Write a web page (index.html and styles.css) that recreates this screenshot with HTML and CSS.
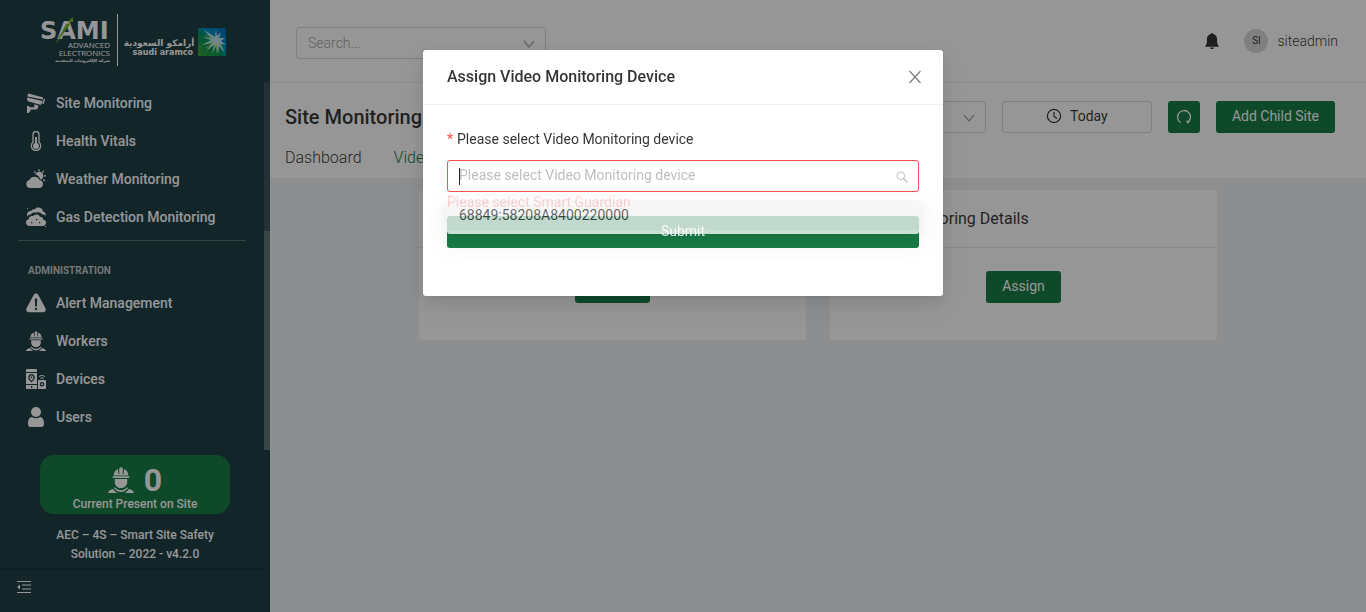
FILE: index.html
```html
<!DOCTYPE html>
<html lang="en">
<head>
<meta charset="utf-8">
<meta name="viewport" content="width=device-width, initial-scale=1">
<title>Site Monitoring</title>
<link rel="stylesheet" href="styles.css">
</head>
<body>
<svg class="sprite" aria-hidden="true">
  <symbol id="worker" viewBox="0 0 20 20">
    <path d="M3.6 7.2h12.8v1.2H3.6zM4.3 6.6C4.4 4.200 5.700 2.300 7.500 1.500l.7 4h.6L8.500.900h3l-.3 4.600h.6l.7-4c1.800.8 3.100 2.700 3.200 5.100zM9.500 0h1v5.500h-1zM5.200 9.200h9.600v2.300c0 2.600-2.100 4.700-4.800 4.700s-4.800-2.100-4.800-4.700zM5.300 15.500c1.200 1.500 2.900 2.300 4.700 2.300s3.500-.8 4.700-2.300l.7.900c-1.400 1.900-3.300 2.800-5.400 2.800s-4-.9-5.400-2.800zM0 20c.3-1.600 2-2.600 4-3 .9 1.500 1.900 2.400 3.200 3zM20 20c-.3-1.600-2-2.600-4-3-.9 1.500-1.900 2.400-3.200 3z"/>
  </symbol>
  <symbol id="chevron" viewBox="0 0 12 12">
    <path d="M1 3l5 6 5-6" fill="none" stroke="currentColor" stroke-width="1.200"/>
  </symbol>
</svg>

<div class="app">
  <aside class="sidebar">
    <div class="brand">
      <svg class="brand-logo" viewBox="0 0 190 56" role="img" aria-label="SAMI Advanced Electronics, Saudi Aramco">
        <defs>
          <linearGradient id="sky" x1="0" y1="1" x2="1" y2="0">
            <stop offset="0" stop-color="#3fa535"/><stop offset=".45" stop-color="#00945e"/><stop offset=".6" stop-color="#0093c8"/><stop offset="1" stop-color="#0068b4"/>
          </linearGradient>
        </defs>
        <text class="logo-sami" x="0" y="29">SAMI</text>
        <path d="M27 12l6-5v5zM26 14l5-1-16 22z" fill="#7ab32c"/>
        <text class="logo-sub" x="70" y="38" text-anchor="end">ADVANCED</text>
        <text class="logo-sub" x="70" y="46" text-anchor="end">ELECTRONICS</text>
        <text class="logo-tiny" x="70" y="52" text-anchor="end">شركة الإلكترونيات المتقدمة</text>
        <path d="M77.500 4v52" stroke="#fff" stroke-width="1"/>
        <text class="logo-ar" x="119" y="36" text-anchor="middle">أرامكو السعودية</text>
        <text class="logo-en" x="153" y="45" text-anchor="end">saudi aramco</text>
        <rect x="158" y="18" width="28" height="28" fill="url(#sky)"/>
        <path d="M175 27l-11-7 7 8-9-1 9 3-9 5 10-2-6 8 8-6-2 9 4-8 2 8 1-8 5 6-3-8 5 1-5-4 4-3-6 0 2-6-4 4-1-7z" fill="#fff" fill-opacity=".75"/>
        <path d="M174 29l-9-4M173 32l-7 6M176 34l1 9M179 33l5 7" stroke="#9fd04a" stroke-width=".8"/>
      </svg>
    </div>
    <nav class="menu">
      <div class="menu-list">
        <a class="menu-item" href="#"><svg class="menu-icon" viewBox="0 0 20 20"><path d="M2.500.500l14 3.800c.6.200.8.600.7 1.100l-.3 1.200L1.500 3.400 1.800 1c.1-.4.300-.6.700-.500zM1.200 4.400L16.500 8l-1.200 3.300c-.2.400-.6.600-1 .500L2.700 8.500C1.300 8 .8 6.700 1.200 4.400zM18 5.500l1 .4-1.200 5-1.600-.5zM8.500 11.200l4 1.200-.8 2.800c-.2.800-.7 1.200-1.500 1.200H4.500v2h-1.300V20H1v-7h2.200v1.300h5z"/></svg>Site Monitoring</a>
        <a class="menu-item" href="#"><svg class="menu-icon" viewBox="0 0 20 20"><path d="M7 11.200V3.600a3 3 0 016 0v7.600a4.700 4.700 0 11-6 0z" fill="none" stroke="currentColor" stroke-width="1.300"/><circle cx="10" cy="15" r="3"/><path d="M9 6h2v8H9z"/></svg>Health Vitals</a>
        <a class="menu-item" href="#"><svg class="menu-icon" viewBox="0 0 20 20"><path d="M4 19a4 4 0 01-.5-7.900A5.500 5.500 0 0113.500 11c2 .2 3.500 1.900 3.500 4s-1.500 4-3.500 4zM9.200 5.500a4.200 4.200 0 117 4.300l-.8.700c-.6-.4-.9-.5-1.300-.6C13.200 7.500 11.500 6 9.200 5.500zM12 .5l1.300-.3.500 2-1.300.3zM17 1.500l1.200.6-1.200 1.800-1-.7zM18 6.200h2v1.300h-2zM17.500 10l1.800 1.500-.8.900-1.700-1.400zM7.500 3l1-.9 1.500 1.300-.9.900z"/></svg>Weather Monitoring</a>
        <a class="menu-item" href="#"><svg class="menu-icon" viewBox="0 0 20 20"><path d="M1 7.500C1 5 3 4 5 4c1-1.500 2.500-2 3.800-1.500C10 .3 12 .1 14 .8c2 .8 2.800 2 2.800 3.500C19 5 20 6.500 19.500 9c-1-1.200-2-1.600-3.500-1.700-1.500-1.800-4-2.500-6-1.500C7.500 5 5.500 6 5 7.500c-2 0-3 .7-4 2z"/><path fill-rule="evenodd" d="M3.500 19C1.500 19 0 17.500 0 15.500c0-1.800 1-3 2.500-3.300.2-2 2-3.600 4.500-3.200C9 6.800 13 6.800 14 9.800c2 .1 3 1 3.200 2.700 1.800.3 2.800 1.500 2.800 3.200 0 2-1.500 3.300-3.500 3.300zM5 15v1.300h1.300V15zM10 12v1.300h1.300V12zM13 15v1.300h1.300V15z"/><path d="M1.200 1h1v1h-1zM19 19h1v1h-1z"/></svg>Gas Detection Monitoring</a>
      </div>
      <h2 class="menu-heading">ADMINISTRATION</h2>
      <div class="menu-list">
        <a class="menu-item" href="#"><svg class="menu-icon" viewBox="0 0 20 20"><path fill-rule="evenodd" d="M7.800 1.800c1-1.700 3.400-1.700 4.400 0l7.300 13.500c1 1.700-.2 3.900-2.200 3.900H2.700c-2 0-3.200-2.200-2.200-3.900zM8.800 5.500l.3 8h1.800l.3-8zM9 15v2h2v-2z"/></svg>Alert Management</a>
        <a class="menu-item" href="#"><svg class="menu-icon"><use href="#worker"/></svg>Workers</a>
        <a class="menu-item" href="#"><svg class="menu-icon" viewBox="0 0 20 20"><path fill-rule="evenodd" d="M1.300 0h8.400C10.500 0 11 .5 11 1.300V3H0V1.300C0 .5.500 0 1.300 0zM0 4h11v11H0zM5.500 5C3.500 5 2.200 6.500 2.200 8.300c0 2 1.500 3.300 3.300 5.200 1.800-1.900 3.300-3.200 3.300-5.200C8.800 6.500 7.500 5 5.500 5zM0 16h11v2.700c0 .8-.5 1.300-1.300 1.300H1.300C.5 20 0 19.500 0 18.700zM5 17v2h1.300v-2zM13 11h6c.6 0 1 .4 1 1v7c0 .6-.4 1-1 1h-7v-8c0-.6.400-1 1-1zM16 13a2.300 2.300 0 100 4.600 2.300 2.300 0 000-4.600z"/><path fill-rule="evenodd" d="M5.500 6.200a2.200 2.200 0 00-2 2.200c0 1.300.9 2 2 3.300 1.100-1.300 2-2 2-3.300a2.200 2.200 0 00-2-2.200zM4.800 7.500h1.400v1.700H4.800z"/><circle cx="16" cy="15.300" r="1"/><path d="M13 7.500q3-2.500 6 0M14.300 9.500q1.700-1.400 3.400 0" fill="none" stroke="currentColor"/></svg>Devices</a>
        <a class="menu-item" href="#"><svg class="menu-icon" viewBox="0 0 20 20"><circle cx="10" cy="5" r="5"/><path d="M2 16c0-3.600 1.500-5.800 4-6 2.400 1.800 5.600 1.800 8 0 2.500.2 4 2.400 4 6v1.500c0 1.500-1 2.500-2.500 2.500h-11C3 20 2 19 2 17.500z"/></svg>Users</a>
      </div>
    </nav>
    <section class="presence">
      <div class="presence-row"><svg class="presence-icon"><use href="#worker"/></svg><strong class="presence-count">0</strong></div>
      <p class="presence-label">Current Present on Site</p>
    </section>
    <p class="version">AEC – 4S – Smart Site Safety<br>Solution – 2022 - v4.2.0</p>
    <div class="sidebar-foot">
      <button class="fold" type="button" aria-label="Collapse menu"><svg viewBox="0 0 16 16" width="16" height="16"><path d="M1 2h14v1H1zM6 5.500h9v1H6zM6 9.500h9v1H6zM1 13h14v1H1zM4 5.500v5L1 8z"/></svg></button>
    </div>
  </aside>

  <div class="main">
    <header class="topbar">
      <div class="picker search">
        <select aria-label="Search"><option>Search...</option></select>
        <svg class="picker-arrow"><use href="#chevron"/></svg>
      </div>
      <div class="account">
        <button class="bell" type="button" aria-label="Notifications"><svg viewBox="0 0 16 16" width="16" height="16"><path d="M7.200 0h1.600v1.100c2.700.4 4.300 2.400 4.300 5.200v4l1.600 2.700v.8H1.300V13l1.600-2.700v-4c0-2.800 1.600-4.800 4.300-5.200zM6 14.500h4c-.2 1-1 1.500-2 1.500s-1.800-.5-2-1.500z"/></svg></button>
        <span class="avatar">SI</span>
        <span class="account-name">siteadmin</span>
      </div>
    </header>

    <section class="pagehead">
      <div class="pagehead-row">
        <h1 class="page-title">Site Monitoring</h1>
        <div class="tools">
          <div class="picker site">
            <select aria-label="Site"><option></option></select>
            <svg class="picker-arrow"><use href="#chevron"/></svg>
          </div>
          <button class="btn today" type="button"><svg viewBox="0 0 16 16" width="16" height="16"><g fill="none" stroke="currentColor" stroke-width="1.200"><circle cx="8" cy="8" r="6.600"/><path d="M8 4v4.500l3 2"/></g></svg>Today</button>
          <button class="btn btn-primary reload" type="button" aria-label="Reload"><svg viewBox="0 0 16 16" width="16" height="16"><path d="M4.500 13.500a6.500 6.500 0 117.300-.2" fill="none" stroke="currentColor" stroke-width="1.300"/><path d="M10 11.500l4 .5-2.500 3z"/></svg></button>
          <button class="btn btn-primary" type="button">Add Child Site</button>
        </div>
      </div>
      <nav class="tabs">
        <a class="tab" href="#">Dashboard</a>
        <a class="tab tab-active" href="#">Video</a>
      </nav>
    </section>

    <main class="cards">
      <article class="card">
        <h2 class="card-title">Details</h2>
        <div class="card-body"><button class="btn btn-primary" type="button">Assign</button></div>
      </article>
      <article class="card">
        <h2 class="card-title">Video Monitoring Details</h2>
        <div class="card-body"><button class="btn btn-primary" type="button">Assign</button></div>
      </article>
    </main>
  </div>
</div>

<div class="mask">
  <div class="modal" role="dialog" aria-modal="true" aria-labelledby="modal-title">
    <header class="modal-head">
      <h2 class="modal-title" id="modal-title">Assign Video Monitoring Device</h2>
      <button class="close" type="button" aria-label="Close"><svg viewBox="0 0 16 16" width="16" height="16"><path d="M2.500 2l11 12M13.500 2l-11 12" fill="none" stroke="currentColor" stroke-width="1.300"/></svg></button>
    </header>
    <form class="modal-body">
      <label class="label" for="device"><span class="required">*</span>Please select Video Monitoring device</label>
      <div class="field">
        <input class="field-input" id="device" type="text" role="combobox" aria-expanded="true" aria-controls="device-list" placeholder="Please select Video Monitoring device">
        <span class="caret"></span>
        <svg class="field-icon" viewBox="0 0 12 12"><circle cx="4.800" cy="4.800" r="3.800" fill="none" stroke="currentColor"/><path d="M7.500 7.500l4 4" stroke="currentColor" stroke-width="1.200"/></svg>
        <div class="dropdown" id="device-list" role="listbox"><div class="option" role="option" aria-selected="false">68849:58208A8400220000</div></div>
      </div>
      <p class="error">Please select Smart Guardian</p>
      <button class="btn btn-primary submit" type="button">Submit</button>
    </form>
  </div>
</div>
</body>
</html>
```

FILE: styles.css
```css
*, *::before, *::after { box-sizing: border-box; }

body {
  margin: 0;
  font: 300 14px/22px Roboto, "Noto Sans", sans-serif;
  color: rgba(0, 0, 0, .8);
  background: #f0f2f5;
}

h1, h2, p { margin: 0; }
a { color: inherit; text-decoration: none; }
svg { display: block; fill: currentColor; flex: none; }
button, input, select { font: inherit; color: inherit; }
button { cursor: pointer; }
.sprite { display: none; }

.app { display: flex; min-height: 100vh; }

/* Sidebar */
.sidebar {
  display: flex;
  flex-direction: column;
  flex: none;
  width: 270px;
  height: 100vh;
  background: #203f46;
  color: #fff;
}
.brand { flex: none; height: 82px; padding: 10px 40px 0; }
.brand-logo { width: 190px; height: 56px; }
.logo-sami { font: 700 24px "DejaVu Sans", sans-serif; }
.logo-sub { font: 400 8px "Open Sans", sans-serif; }
.logo-tiny { font: 700 4px "DejaVu Sans", sans-serif; }
.logo-ar { font: 700 9px "DejaVu Sans", sans-serif; }
.logo-en { font: 700 8px "DejaVu Sans", sans-serif; }

.menu {
  height: 368px;
  padding: 2px 18px 0;
  background:
    linear-gradient(#5f7679, #5f7679) right 149px / 6px 100% no-repeat,
    linear-gradient(#3a5459, #3a5459) right top / 6px 100% no-repeat;
}
.menu-item {
  display: flex;
  align-items: center;
  gap: 10px;
  height: 38px;
  padding-left: 8px;
  font-weight: 500;
}
.menu-icon { width: 20px; height: 20px; }
.menu-heading {
  margin: 4px 6px 0 0;
  padding: 19px 10px 2px;
  border-top: 1px solid #5f7679;
  font-size: 10px;
  font-weight: 700;
  color: #c3cccd;
}
.presence {
  margin: 5px 40px 0;
  height: 59px;
  padding-top: 10px;
  border-radius: 14px;
  background: #187c46;
  text-align: center;
}
.presence-row { display: flex; justify-content: center; align-items: center; gap: 10px; height: 30px; }
.presence-icon { width: 26px; height: 28px; }
.presence-count { font-size: 32px; line-height: 30px; font-weight: 700; }
.presence-label { font-size: 12px; line-height: 18px; font-weight: 500; }
.version {
  padding: 12px 40px 4px;
  font-size: 12px;
  line-height: 19px;
  font-weight: 500;
  text-align: center;
}
.sidebar-foot { flex: 1; padding: 10px 16px; border-top: 1px solid #1b363c; }
.fold, .bell, .close { padding: 0; border: 0; background: none; }

/* Page */
.main { flex: 1; min-width: 0; }
.topbar {
  display: flex;
  justify-content: space-between;
  align-items: center;
  height: 83px;
  padding: 4px 28px 0 26px;
  border-bottom: 1px solid #f0f0f0;
  background: #fff;
}
.picker { position: relative; height: 32px; }
.picker select {
  width: 100%;
  height: 100%;
  padding: 0 11px;
  border: 1px solid #d9d9d9;
  border-radius: 3px;
  background: #fff;
  color: #a8a8a8;
  appearance: none;
}
.picker-arrow { position: absolute; right: 11px; top: 11px; width: 12px; height: 12px; color: #a8a8a8; }
.search { width: 250px; }
.site { width: 200px; }
.account { display: flex; align-items: center; padding-bottom: 4px; }
.bell { margin-right: 24px; }
.avatar {
  width: 24px;
  height: 24px;
  margin-right: 9px;
  border-radius: 50%;
  background: #d9d9d9;
  font-size: 10px;
  font-weight: 400;
  line-height: 24px;
  text-align: center;
}
.pagehead { height: 95px; padding: 18px 31px 0 15px; background: #fff; }
.pagehead-row { display: flex; justify-content: space-between; align-items: center; }
.page-title { font-size: 20px; line-height: 32px; font-weight: 500; }
.tools { display: flex; gap: 16px; }
.btn {
  display: inline-flex;
  justify-content: center;
  align-items: center;
  gap: 8px;
  height: 32px;
  padding: 0 16px 2px;
  border: 0;
  border-radius: 3px;
  font-weight: 400;
}
.btn-primary { background: #187c46; color: #fff; }
.today { width: 150px; border: 1px solid #d9d9d9; background: #fff; }
.reload { width: 32px; padding: 0; }
.tabs { display: flex; gap: 32px; padding-top: 14px; font-size: 16px; }
.tab-active { color: #187c46; }

.cards { display: flex; justify-content: center; padding-top: 12px; }
.card {
  flex: 0 0 calc(37.5% - 24px);
  height: 150px;
  margin: 0 12px;
  border-radius: 2px;
  background: #fff;
}
.card-title {
  padding: 17px 24px;
  border-bottom: 1px solid #e8e8e8;
  font-size: 16px;
  line-height: 23px;
  font-weight: 400;
}
.card-body { display: flex; justify-content: center; padding: 23px; }

/* Modal */
.mask {
  position: fixed;
  inset: 0;
  padding-top: 50px;
  background: rgba(0, 0, 0, .41);
}
.modal {
  width: 520px;
  max-width: 100%;
  margin: 0 auto;
  border-radius: 3px;
  background: #fff;
  box-shadow: 0 3px 6px -4px rgba(0, 0, 0, .12), 0 6px 16px rgba(0, 0, 0, .08), 0 9px 28px 8px rgba(0, 0, 0, .05);
}
.modal-head {
  display: flex;
  justify-content: space-between;
  align-items: center;
  height: 55px;
  padding: 0 20px 0 24px;
  border-bottom: 1px solid #f0f0f0;
}
.modal-title { font-size: 16px; font-weight: 500; }
.close { color: #808080; }
.modal-body { padding: 23px 24px 48px; }
.label { display: block; margin-bottom: 10px; font-weight: 400; }
.required { margin-right: 4px; color: #ff4d4f; }
.field { position: relative; }
.field-input {
  display: block;
  width: 100%;
  height: 32px;
  padding: 0 30px 2px 11px;
  border: 1px solid #ff4d4f;
  border-radius: 3px;
  outline: 0;
  background: #fff;
  font-weight: 400;
}
.field-input::placeholder { color: #bfbfbf; opacity: 1; }
.caret { position: absolute; left: 12px; top: 8px; width: 1px; height: 17px; background: #262626; }
.field-icon { position: absolute; right: 11px; top: 11px; width: 12px; height: 12px; color: #bfbfbf; }
.dropdown {
  position: absolute;
  z-index: 1;
  top: 36px;
  left: 0;
  right: 0;
  padding: 4px 0;
  border-radius: 3px;
  background: #fff;
  box-shadow: 0 3px 6px -4px rgba(0, 0, 0, .12), 0 6px 16px rgba(0, 0, 0, .08), 0 9px 28px 8px rgba(0, 0, 0, .05);
  opacity: .77;
}
.option { padding: 0 12px; background: #f5f5f5; font-weight: 400; line-height: 30px; }
.error { height: 24px; color: #ff4d4f; font-weight: 400; line-height: 21px; }
.submit { width: 100%; }
```
